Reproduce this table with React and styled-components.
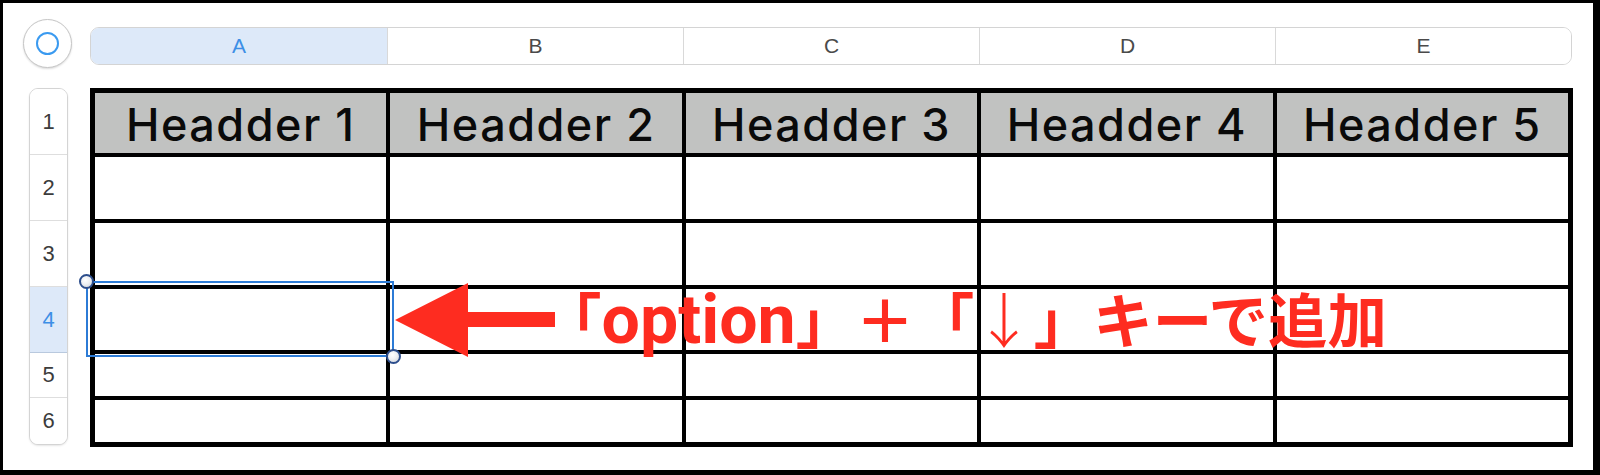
import React from 'react';
import styled, { createGlobalStyle } from 'styled-components';

const Global = createGlobalStyle`
  html, body { margin: 0; padding: 0; background: #fff; }
  body { font-family: "Liberation Sans", Arial, sans-serif; }
`;

const Frame = styled.div`
  box-sizing: border-box;
  width: 1600px;
  height: 475px;
  border-style: solid;
  border-color: #000;
  border-width: 3px 7px 5px 3px;
  background: #fff;
  padding: 16px 0 0 20px;
  display: grid;
  grid-template-columns: 49px 1483px;
  grid-template-rows: 49px 359px;
  column-gap: 18px;
  row-gap: 20px;
`;

const CornerButton = styled.div`
  box-sizing: border-box;
  width: 49px;
  height: 49px;
  border-radius: 50%;
  border: 1px solid #c6c6c6;
  background: #fff;
  box-shadow: 0 1px 2px rgba(0, 0, 0, 0.14);
  display: flex;
  align-items: center;
  justify-content: center;
`;

const Ring = styled.div`
  box-sizing: border-box;
  width: 23px;
  height: 23px;
  border-radius: 50%;
  border: 2px solid #3a9af0;
`;

const ColumnBar = styled.div`
  box-sizing: border-box;
  align-self: start;
  margin-top: 8px;
  width: 1482px;
  height: 38px;
  border: 1px solid #d4d4d4;
  border-radius: 9px;
  overflow: hidden;
  display: grid;
  grid-template-columns: repeat(5, 1fr);
  background: #fff;
`;

const ColumnCell = styled.div`
  display: flex;
  align-items: center;
  justify-content: center;
  font-family: "Liberation Sans", Arial, sans-serif;
  font-size: 21px;
  color: ${(p) => (p.$selected ? '#3d8fe6' : '#4a4a4a')};
  background: ${(p) => (p.$selected ? '#dde9f9' : '#fff')};
  border-left: ${(p) => (p.$first ? 'none' : '1px solid #d9d9d9')};
  ${(p) => (p.$selected ? 'border-right: 1px solid #b9c9de; margin-right: -1px;' : '')}
`;

const RowBar = styled.div`
  box-sizing: border-box;
  align-self: start;
  margin-left: 6px;
  width: 39px;
  border: 1px solid #d4d4d4;
  border-radius: 9px;
  overflow: hidden;
  background: #fff;
  box-shadow: 0 1px 2px rgba(0, 0, 0, 0.1);
  display: flex;
  flex-direction: column;
`;

const RowCell = styled.div`
  box-sizing: border-box;
  height: ${(p) => p.$h}px;
  display: flex;
  align-items: center;
  justify-content: center;
  font-family: "Liberation Sans", Arial, sans-serif;
  font-size: 22px;
  color: ${(p) => (p.$selected ? '#3d8fe6' : '#3c3c3c')};
  background: ${(p) => (p.$selected ? '#dde9f9' : '#fff')};
  border-bottom: ${(p) => (p.$last ? 'none' : p.$selected ? '1px solid #b9c9de' : '1px solid #dedede')};
`;

const Main = styled.div`
  position: relative;
`;

const Table = styled.div`
  box-sizing: border-box;
  width: 1483px;
  height: 359px;
  background: #000;
  padding: 5px;
  display: grid;
  grid-template-columns: repeat(5, 1fr);
  grid-template-rows: 60px 62px 62px 61px 42px 42px;
  gap: 4px;
`;

const Cell = styled.div`
  background: ${(p) => (p.$head ? '#c1c2c1' : '#fff')};
  display: flex;
  align-items: center;
  justify-content: center;
  font-family: Inter, "Liberation Sans", sans-serif;
  font-weight: 500;
  font-size: 45px;
  letter-spacing: 1.5px;
  color: #0a0a0a;
  padding-top: 2px;
  box-sizing: border-box;
`;

const Selection = styled.div`
  position: absolute;
  left: -4px;
  top: 193px;
  width: 308px;
  height: 76px;
  box-sizing: border-box;
  border: 2px solid #2c7bd6;
  pointer-events: none;
`;

const Handle = styled.div`
  position: absolute;
  width: 15px;
  height: 15px;
  box-sizing: border-box;
  border-radius: 50%;
  border: 2px solid #2d4e8c;
  background: radial-gradient(circle at 40% 35%, #ffffff 0%, #eef0f3 45%, #c9ced6 100%);
  ${(p) => (p.$pos === 'tl' ? 'left: -9px; top: -9px;' : 'right: -9px; bottom: -9px;')}
`;

const Annotation = styled.div`
  position: absolute;
  left: 305px;
  top: 195px;
  height: 74px;
  display: flex;
  align-items: center;
  pointer-events: none;
`;

const Note = styled.span`
  margin-left: -13px;
  font-family: "Noto Sans CJK JP", "Liberation Sans", sans-serif;
  font-weight: 700;
  font-size: 59.5px;
  line-height: 1;
  color: #fe2c20;
  white-space: nowrap;
`;

const Latin = styled.span`
  font-family: Roboto, "Liberation Sans", sans-serif;
  font-weight: 700;
  font-size: 68px;
`;

const Thin = styled.span`
  font-weight: 300;
`;

const columns = ['A', 'B', 'C', 'D', 'E'];
const rowHeights = [66, 66, 66, 66, 45, 46];

export default function App() {
  return (
    <>
      <Global />
      <Frame>
        <CornerButton>
          <Ring />
        </CornerButton>
        <ColumnBar>
          {columns.map((c, i) => (
            <ColumnCell key={c} $first={i === 0} $selected={i === 0}>
              {c}
            </ColumnCell>
          ))}
        </ColumnBar>
        <RowBar>
          {rowHeights.map((h, i) => (
            <RowCell key={i} $h={h} $selected={i === 3} $last={i === rowHeights.length - 1}>
              {i + 1}
            </RowCell>
          ))}
        </RowBar>
        <Main>
          <Table>
            {columns.map((c, i) => (
              <Cell key={'h' + c} $head>
                {'Headder ' + (i + 1)}
              </Cell>
            ))}
            {Array.from({ length: 25 }).map((_, i) => (
              <Cell key={i} />
            ))}
          </Table>
          <Selection>
            <Handle $pos="tl" />
            <Handle $pos="br" />
          </Selection>
          <Annotation>
            <svg width="160" height="74" viewBox="0 0 160 74">
              <polygon points="0,37 73,0 73,29 160,29 160,44 73,44 73,74" fill="#fe2c20" />
            </svg>
            <Note>
              「<Latin>option</Latin>」＋「<Thin>↓</Thin>」キーで追加
            </Note>
          </Annotation>
        </Main>
      </Frame>
    </>
  );
}
